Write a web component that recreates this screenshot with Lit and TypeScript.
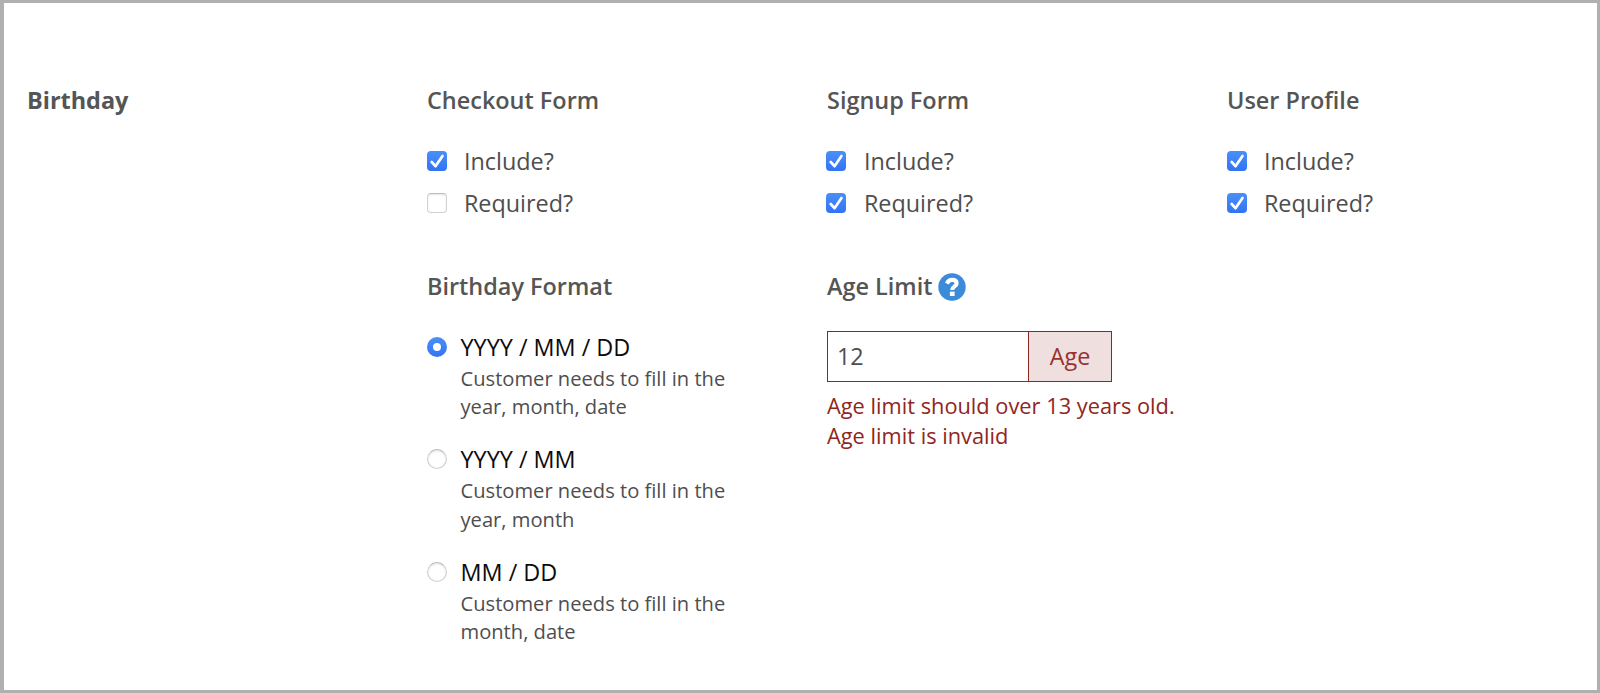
import { LitElement, html, css } from "lit";
import { customElement, property } from "lit/decorators.js";

@customElement("check-box")
class CheckBox extends LitElement {
  @property({ type: Boolean }) checked = false;
  static styles = css`
    :host { display: block; width: 20px; height: 20px; flex: none; }
    .box { display: block; width: 20px; height: 20px; box-sizing: border-box; border-radius: 4px; }
    .off { background: #fff; border: 1px solid #d2d2d2; border-top-color: #bdbdbd; box-shadow: inset 0 1px 2px rgba(0,0,0,.1); }
    .on { background: linear-gradient(#4a90f8, #3273f6); }
    svg { display: block; }
  `;
  render() {
    return this.checked
      ? html`<span class="box on"><svg width="20" height="20" viewBox="0 0 20 20">
          <path d="M4.7 11 L8.5 15.2 L15.5 5" fill="none" stroke="#fff" stroke-width="2.7" stroke-linecap="round" stroke-linejoin="round" /></svg></span>`
      : html`<span class="box off"></span>`;
  }
}

@customElement("radio-dot")
class RadioDot extends LitElement {
  @property({ type: Boolean }) checked = false;
  static styles = css`
    :host { display: block; width: 20px; height: 20px; flex: none; }
    .dot { display: grid; place-items: center; width: 20px; height: 20px; box-sizing: border-box; border-radius: 50%; }
    .off { background: #fff; border: 1px solid #cdcdcd; border-top-color: #b9b9b9; box-shadow: inset 0 1px 2px rgba(0,0,0,.12); }
    .on { background: linear-gradient(#4a90f8, #3273f6); }
    .hole { width: 8px; height: 8px; border-radius: 50%; background: #fff; }
  `;
  render() {
    return this.checked
      ? html`<span class="dot on"><span class="hole"></span></span>`
      : html`<span class="dot off"></span>`;
  }
}

const groups = [
  { title: "Checkout Form", include: true, required: false },
  { title: "Signup Form", include: true, required: true },
  { title: "User Profile", include: true, required: true },
];

const formats = [
  { label: "YYYY / MM / DD", note: ["Customer needs to fill in the", "year, month, date"] },
  { label: "YYYY / MM", note: ["Customer needs to fill in the", "year, month"] },
  { label: "MM / DD", note: ["Customer needs to fill in the", "month, date"] },
];

@customElement("app-root")
class AppRoot extends LitElement {
  static styles = css`
    :host { display: block; font-family: "Open Sans", "Noto Sans", sans-serif; font-size: 23.4px; color: #4e4e4e; }
    .frame { box-sizing: border-box; width: 1600px; height: 693px; background: #fff; overflow: hidden;
      border: 3px solid #b0b0b0; border-left-width: 4px; padding: 81px 0 0 23px; }
    .grid { display: grid; grid-template-columns: 400px 400px 400px 1fr; white-space: nowrap; }
    .title { font-weight: 600; font-size: 23.45px; line-height: 32px; height: 32px; display: flex; align-items: center; color: #555; }
    .main { font-weight: 700; }
    .checks { margin-top: 24px; }
    .check { display: grid; grid-template-columns: 37.4px auto; align-items: center; height: 42px; margin-left: -0.5px; }
    .group:nth-of-type(2) check-box { margin-left: -0.5px; }
    .group:nth-of-type(3) check-box { margin-left: 0.5px; }
    .second { margin-top: 46px; }
    .formats { margin-top: 29px; }
    .format { display: flex; gap: 14px; margin-left: -0.5px; height: 112.3px; }
    .format radio-dot { margin-top: 6px; }
    .label { color: #0c0c0c; line-height: 32px; }
    .note { font-size: 20.15px; line-height: 28.3px; margin-top: 1px; }
    .help { margin: 2px 0 0 5px; display: block; }
    .field { display: flex; box-sizing: border-box; width: 285px; height: 51px; margin-top: 29px; border: 1px solid #8f2620; line-height: 48px; }
    .value { flex: 1; padding-left: 9px; }
    .unit { width: 83px; box-sizing: border-box; border-left: 1px solid #8f2620; background: #efdfdf; color: #96332f; text-align: center; }
    .errors { margin-top: 9px; font-size: 21.8px; line-height: 30.2px; color: #8f2620; }
  `;
  render() {
    return html`<div class="frame"><div class="grid">
      <div class="title main">Birthday</div>
      ${groups.map((g) => html`<section class="group">
        <div class="title">${g.title}</div>
        <div class="checks">
          <div class="check"><check-box ?checked=${g.include}></check-box><span>Include?</span></div>
          <div class="check"><check-box ?checked=${g.required}></check-box><span>Required?</span></div>
        </div>
      </section>`)}
      <div></div>
      <section class="second">
        <div class="title">Birthday Format</div>
        <div class="formats">
          ${formats.map((f, i) => html`<div class="format">
            <radio-dot ?checked=${i === 0}></radio-dot>
            <div><div class="label">${f.label}</div>
            <div class="note">${f.note[0]}<br />${f.note[1]}</div></div>
          </div>`)}
        </div>
      </section>
      <section class="second">
        <div class="title"><span>Age Limit</span>
          <svg class="help" width="28" height="28" viewBox="0 0 28 28">
            <circle cx="14" cy="14" r="13.7" fill="#3c8bd9" />
            <path d="M8.9 10.6 C10 8 11.6 6.9 14.1 6.9 C17 6.9 18.6 8.4 18.6 10.4 C18.6 13.6 14.2 13.3 14.2 16.9" fill="none" stroke="#fff" stroke-width="4.1" />
            <rect x="11.9" y="18.6" width="4.7" height="4.4" fill="#fff" />
          </svg>
        </div>
        <div class="field"><div class="value">12</div><div class="unit">Age</div></div>
        <div class="errors">Age limit should over 13 years old.<br />Age limit is invalid</div>
      </section>
      <div></div>
    </div></div>`;
  }
}
